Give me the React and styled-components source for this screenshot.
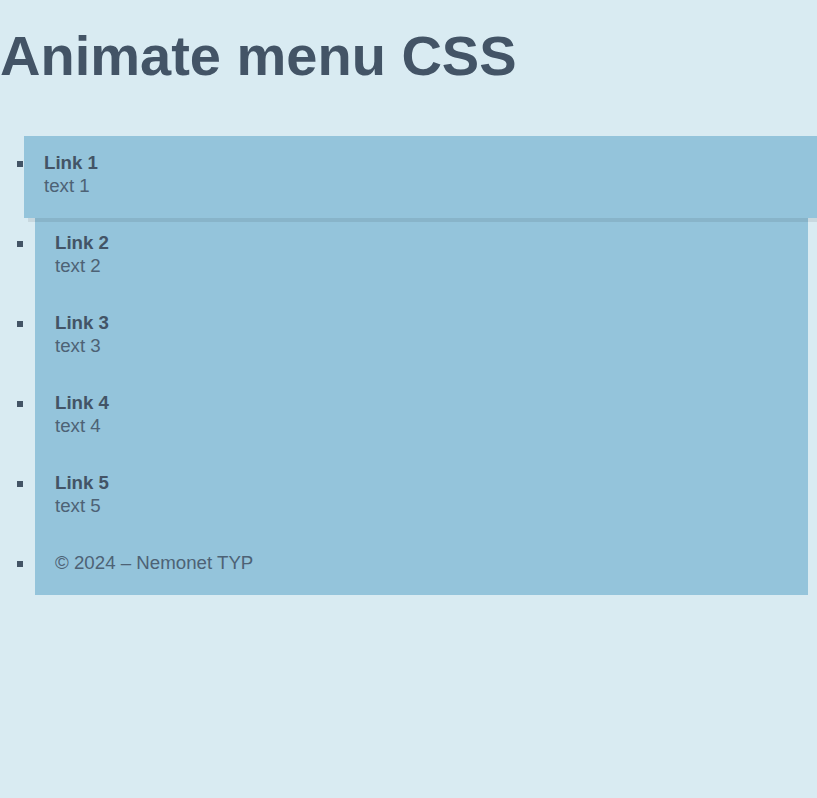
import React from 'react';
import styled, { createGlobalStyle } from 'styled-components';

const GlobalStyle = createGlobalStyle`
	html, body {
		margin: 0;
		padding: 0;
		background: #d9ebf2;
		overflow-x: hidden;
	}
	body {
		font-family: 'Liberation Sans', Arial, sans-serif;
		color: #435466;
		min-height: 798px;
	}
`;

const links = [
	{ title: 'Link 1', text: 'text 1' },
	{ title: 'Link 2', text: 'text 2' },
	{ title: 'Link 3', text: 'text 3' },
	{ title: 'Link 4', text: 'text 4' },
	{ title: 'Link 5', text: 'text 5' },
];

const App = () => {
	return (
		<>
			<GlobalStyle />
			<Page>
				<Title>Animate menu CSS</Title>
				<Menu>
					{links.map((link, i) => (
						<Item key={link.title}>
							<Card href="#" $active={i === 0}>
								<LinkTitle>{link.title}</LinkTitle>
								<LinkText>{link.text}</LinkText>
							</Card>
						</Item>
					))}
					<Item>
						<Footer>© 2024 – Nemonet TYP</Footer>
					</Item>
				</Menu>
			</Page>
		</>
	);
};

export default App;

const Page = styled.div`
	padding-top: 24px;
`;

const Title = styled.h1`
	margin: 0;
	font-size: 56px;
	font-weight: 700;
	line-height: 63px;
	color: #435466;
`;

const Menu = styled.ul`
	margin: 49px 9px 0 0;
	padding: 0 0 0 35px;
	list-style: square;
	color: #435466;
`;

const Item = styled.li`
	font-size: 18.7px;
	line-height: 23px;
	position: relative;
	&:first-child {
		z-index: 1;
	}
`;

const Card = styled.a`
	display: block;
	box-sizing: border-box;
	height: ${(p) => (p.$active ? '82px' : '80px')};
	padding: 15px 20px 19px;
	background: #94c4db;
	color: #435466;
	text-decoration: none;
	margin-left: ${(p) => (p.$active ? '-11px' : '0')};
	margin-right: ${(p) => (p.$active ? '-20px' : '0')};
	margin-bottom: ${(p) => (p.$active ? '-2px' : '0')};
	box-shadow: ${(p) => (p.$active ? '4px 4px 0 rgba(0, 0, 0, 0.08)' : 'none')};
`;

const LinkTitle = styled.div`
	font-weight: 700;
`;

const LinkText = styled.div`
	color: #4d6275;
`;

const Footer = styled.div`
	box-sizing: border-box;
	height: 59px;
	padding: 15px 20px 21px;
	background: #94c4db;
	color: #4d6275;
`;
